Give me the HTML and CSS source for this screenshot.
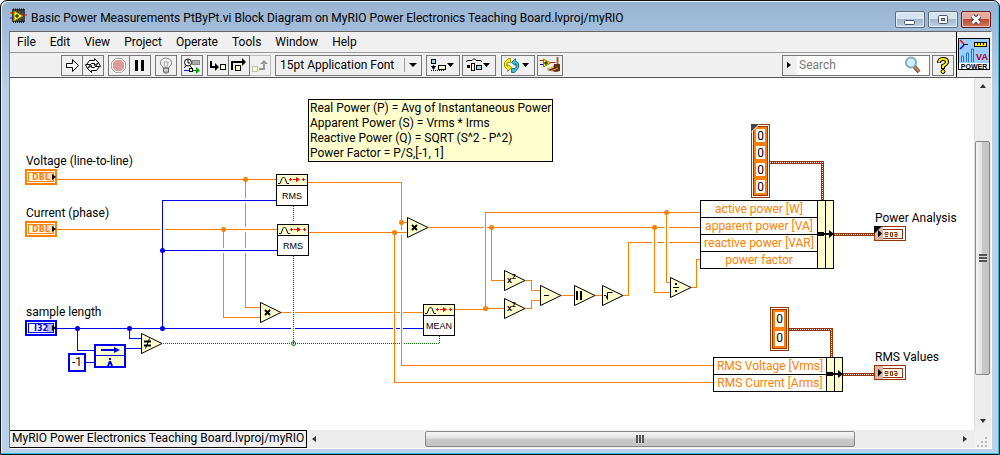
FILE: index.html
```
<!DOCTYPE html>
<html lang="en">
<head>
<meta charset="utf-8">
<title>Basic Power Measurements PtByPt.vi Block Diagram</title>
<link rel="stylesheet" href="styles.css">
</head>
<body>
<div class="window">
  <header class="titlebar">
    <svg class="app-icon" width="17" height="16" viewBox="0 0 17 16"><path d="M2 1h13v13H2z" fill="#444"/><path d="M3 1.5h12M3 14h12" stroke="#111" stroke-width="2" stroke-dasharray="1 1"/><path d="M0 5h4M13 7h4" stroke="#e00"/><path d="M0 10h4" stroke="#00f"/><path d="M4 3l9 5-9 5z" fill="#ff0" stroke="#880"/><path d="M5 8h4M7 6v4" stroke="#000"/></svg>
    <h1 class="title">Basic Power Measurements PtByPt.vi Block Diagram on MyRIO Power Electronics Teaching Board.lvproj/myRIO</h1>
    <div class="caption-buttons">
      <button class="caption" aria-label="Minimize"><svg width="30" height="15" viewBox="0 0 30 15"><rect x="9.500" y="8.500" width="10" height="4" rx="1" fill="#fff" stroke="#4b5563"/></svg></button>
      <button class="caption" aria-label="Maximize"><svg width="30" height="15" viewBox="0 0 30 15"><rect x="10.500" y="3.500" width="9" height="8" rx="1" fill="#fff" stroke="#4b5563"/><rect x="13.500" y="6.500" width="3" height="2" fill="#b4c6da" stroke="#4b5563"/></svg></button>
      <button class="caption close" aria-label="Close"><svg width="30" height="15" viewBox="0 0 30 15"><path d="M11.500 4l7 7M18.500 4l-7 7" stroke="#4b4550" stroke-width="5"/><path d="M11.500 4l7 7M18.500 4l-7 7" stroke="#fff" stroke-width="3"/></svg></button>
    </div>
  </header>
  <div class="client">
    <div class="top">
      <div class="bars">
        <nav class="menubar">
          <button>File</button><button>Edit</button><button>View</button><button>Project</button><button>Operate</button><button>Tools</button><button>Window</button><button>Help</button>
        </nav>
        <div class="toolbar">
          <div class="group">
            <button class="tool" aria-label="Run"><svg width="20" height="20" viewBox="0 0 20 20"><path d="M4.500 7.500h6v-4l6 6-6 6v-4h-6z" fill="#fff" stroke="#000"/></svg></button>
            <button class="tool" aria-label="Run continuously"><svg width="20" height="20" viewBox="0 0 20 20"><path d="M3.500 8.500l3-4h5v-2l4 4-4 3v-2h-3l-2 2" fill="#fff" stroke="#000"/><path d="M16.500 10.500l-3 4h-5v2l-4-4 4-3v2h3l2-2" fill="#fff" stroke="#000"/><path d="M2.500 8.500h5l-3 4zM17.500 10.500h-5l3-4z" fill="#fff" stroke="#000"/></svg></button>
          </div>
          <div class="group">
            <button class="tool" aria-label="Abort execution"><svg width="20" height="20" viewBox="0 0 20 20"><path d="M6.500 2.500h6l4 4v6l-4 4h-6l-4-4v-6z" fill="#eee" stroke="#aaa"/><path d="M7 4h5l3 3v5l-3 3H7l-3-3V7z" fill="#dc9c9c"/></svg></button>
            <button class="tool" aria-label="Pause"><svg width="20" height="20" viewBox="0 0 20 20"><path d="M6.500 4v11M12.500 4v11" stroke="#000" stroke-width="3"/></svg></button>
          </div>
          <div class="group"><button class="tool" aria-label="Highlight execution"><svg width="20" height="20" viewBox="0 0 20 20"><path d="M7.500 12l-3-4c-1-8 12-8 11 0l-3 4z" fill="#eee" stroke="#888"/><path d="M8 6l1 5M12 6l-1 5M8 6h4" stroke="#aaa" fill="none"/><path d="M7.500 12h5v4l-1 1h-3l-1-1z" fill="#aaa" stroke="#666"/><path d="M8 14h4" stroke="#eee"/></svg></button></div>
          <div class="group"><button class="tool" aria-label="Retain wire values"><svg width="20" height="20" viewBox="0 0 20 20"><circle cx="6" cy="6.500" r="3.500" fill="#fff" stroke="#000"/><path d="M6 4v3h2M4 10l-2 2M8 10l2 2" stroke="#000" fill="none"/><rect x="10.500" y="4.500" width="7" height="4" fill="#aaa" stroke="#888"/><path d="M2 14.500h5" stroke="#00f"/><path d="M11 14.500h4" stroke="#080"/><rect x="7.500" y="12.500" width="3" height="3" fill="#fff" stroke="#000"/><path d="M14 11l4 3.500-4 3.500z" fill="#0a0"/></svg></button></div>
          <div class="group">
            <button class="tool" aria-label="Step into"><svg width="20" height="20" viewBox="0 0 20 20"><path d="M3 5v6h5" fill="none" stroke="#000" stroke-width="2"/><path d="M7 7l4 4-4 4z"/><rect x="12.500" y="8.500" width="5" height="5" fill="#ffb" stroke="#000"/></svg></button>
            <button class="tool" aria-label="Step over"><svg width="20" height="20" viewBox="0 0 20 20"><path d="M3 14V6h11" fill="none" stroke="#000" stroke-width="2"/><path d="M13 2l4 4-4 4z"/><rect x="6.500" y="9.500" width="5" height="5" fill="#ffb" stroke="#000"/></svg></button>
            <button class="tool off" aria-label="Step out"><svg width="20" height="20" viewBox="0 0 20 20"><path d="M9 13h5V7" fill="none" stroke="#999" stroke-width="2"/><path d="M10 8l4-4 4 4z" fill="#999"/><rect x="2.500" y="10.500" width="5" height="5" fill="#ffc" stroke="#bbb"/></svg></button>
          </div>
          <div class="group font-group"><select class="font-select" aria-label="Text settings"><option>15pt Application Font</option></select><span class="drop"></span></div>
          <div class="group"><button class="tool wide" aria-label="Align objects"><svg width="32" height="20" viewBox="0 0 32 20"><rect x="4.500" y="3.500" width="4" height="4" fill="#8df" stroke="#000"/><path d="M6.500 9v3M4 14.500h14" stroke="#000" stroke-dasharray="1 1"/><path d="M4 10h5l-2.500 4z"/><rect x="11.500" y="9.500" width="7" height="4" fill="#ffb" stroke="#000"/><path d="M20 7h7l-3.500 4z"/></svg></button></div>
          <div class="group"><button class="tool wide" aria-label="Distribute objects"><svg width="32" height="20" viewBox="0 0 32 20"><path d="M3 5.500l2-1h4l2-2 2 2h4l2 1" stroke="#000" fill="none"/><rect x="4" y="9" width="3" height="3"/><rect x="8.500" y="7.500" width="3" height="7" fill="#ffb" stroke="#000"/><rect x="13.500" y="9.500" width="5" height="4" fill="#8df" stroke="#000"/><path d="M20 7h7l-3.500 4z"/></svg></button></div>
          <div class="group reorder"><button class="tool wide" aria-label="Reorder"><svg width="32" height="20" viewBox="0 0 32 20"><path d="M8.500 2.500h-2l-4 4v4l3 3v2l4-4-4-3v2l-1-2 1-2h3z" fill="#fe0" stroke="#990"/><path d="M9.500 16.500h3l4-5v-4l-3-3v-2l-4 4 4 3v-2l1 2-1 3h-4z" fill="#4bd" stroke="#278"/><path d="M20 7h7l-3.500 4z"/></svg></button></div>
          <div class="group"><button class="tool" aria-label="Clean up diagram"><svg width="24" height="20" viewBox="0 0 24 20"><path d="M2 4.500h5M12 6.500h5" stroke="#e00"/><path d="M2 8.500h4" stroke="#00f"/><path d="M5.500 3l7 4-7 4z" fill="#ff0" stroke="#880"/><path d="M6 7h4M8 5v4" stroke="#000"/><path d="M19.500 1v9" stroke="#963" stroke-width="2"/><path d="M16 8h6v7l-4 1-9-2 6-2z" fill="#631"/><path d="M9 13l7-2M13 15l7-3" stroke="#d93"/></svg></button></div>
          <div class="search"><span class="search-arrow"></span><input type="search" placeholder="Search" aria-label="Search"><svg width="18" height="18" viewBox="0 0 18 18"><path d="M10 10l5 6" stroke="#555" stroke-width="4"/><path d="M11 11l4 4.500" stroke="#c84" stroke-width="2"/><circle cx="7" cy="6.500" r="5" fill="#cdf0ff" stroke="#8ab" stroke-width="2"/></svg></div>
          <button class="tool help" aria-label="Context help"><svg width="20" height="20" viewBox="0 0 20 20"><path d="M6 7q0-4 4-4t4 3q0 2-4 4v3" fill="none" stroke="#000" stroke-width="4"/><circle cx="10" cy="15.500" r="2" fill="#fe0" stroke="#000"/><path d="M6 6.500q0-3.500 4-3.500t4 3q0 2-4 4v2" fill="none" stroke="#fe0" stroke-width="2"/></svg></button>
        </div>
      </div>
      <div class="vi-icon"><svg width="32" height="32" viewBox="0 0 32 32"><rect x=".5" y=".5" width="31" height="31" fill="#9cf" stroke="#000"/><path d="M5 6.500h5" stroke="#000"/><path d="M2 2l4 4" stroke="#e00" stroke-width="1.500"/><path d="M6 7l-4 4" stroke="#00f" stroke-width="1.500"/><rect x="16.500" y="4.500" width="12" height="4" fill="#fe0" stroke="#000"/><path d="M19.500 5v2M22.500 5v2M25.500 5v2" stroke="#000"/><path d="M3.500 24v-6h2v6M8.500 24v-9h2v9M13.500 24V11h2v13" fill="none" stroke="#27c"/><path d="M1 25h30v6H1z" fill="#fff"/><text x="24" y="22" class="vi-va">VA</text><text x="16" y="31" class="vi-power">POWER</text></svg></div>
    </div>
    <div class="work">
      <main class="canvas">
        <svg class="wires" width="964" height="350" viewBox="10 78 964 350">
          <defs>
            <g id="gate"><path d="M.5 .5v20L21 10.500z" fill="#ffffce" stroke="#000"/></g>
            <g id="sq"><text x="3" y="13" class="sq-base">x</text><text x="8" y="9" class="sq-power">2</text></g>
            <g id="mul"><path d="M5 8l5 5M10 8l-5 5" stroke="#000" stroke-width="2"/></g>
            <g id="stat"><rect x=".5" y=".5" width="31" height="31" fill="#fff" stroke="#000"/><path d="M1 1h30v10H1z" fill="#ffffce"/><path d="M0 11.500h32" stroke="#000"/><path d="M2 9.500h2l2-5q1.500-3 3 0l2 5h2" fill="none" stroke="#000"/><path d="M13 5.500h3M14.500 4v3M26 5.500h3M27.500 4v3M17 5.500h6" stroke="#f00"/><path d="M20 3l4 2.500-4 2.500z" fill="#f00"/></g>
            <g id="term"><path d="M1 1h30v14H1z" fill="#fff" stroke="currentColor" stroke-width="2"/><rect x="3.500" y="3.500" width="25" height="9" fill="#fff" stroke="currentColor"/><path d="M22 3h7v10h-7z" fill="currentColor" opacity=".3"/><path d="M27 5l4 3-4 3z"/></g>
            <g id="ind"><rect x=".5" y=".5" width="31" height="14" fill="#fff" stroke="#993300"/><rect x="3.500" y="3.500" width="25" height="9" fill="#fff" stroke="#993300"/><path d="M1 1h8v13H1z" fill="#dbb8a5"/><path d="M4 4l4 3.500-4 4z"/><path d="M14 8.500h-3v-2h3v2M11 10.500h3M16.500 6.500v4h2v-4zM20 6.500h3v4h-2v-2h2" fill="none" stroke="#993300"/></g>
            <g id="merge"><path d="M0 2v-4h6V2H0z"/><path d="M5 0h9" stroke="#000" stroke-width="2"/><path d="M11-4l5 4-5 4z"/></g>
          </defs>
          <g class="wire dbl">
            <path d="M57 179.500H276M57 229.500H160M165 229.500H277M245.500 179V198M245.500 203V227M245.500 232V248M245.500 253V307.500H260M223.500 229V248M223.500 253V317.500H260"/>
            <path d="M308 182.500H401.500V230M401.500 235V365.500H713M401 222.500H407M309 232.500H407M394.500 232V382.500H713M428 227.500H484M487 227.500H664M669 227.500H700"/>
            <path d="M281 312.500H291M295 312.500H393M396 312.500H400M403 312.500H423M455 309.500H485.500V212.500H700M485 308.500H504M491.500 227V280.500H504"/>
            <path d="M525 280.500H531.500V290.500H540M525 308.500H531.500V300.500H540M561 295.500H574M595 295.500H602M623 295.500H628.500V242.500H652M657 242.500H664M669 242.500H700"/>
            <path d="M654.500 227V292.500H670M666.500 212V282.500H670M691 287.500H696.500V259.500H700"/>
          </g>
          <g class="wire int"><path d="M57 328.500H291M295 328.500H393M396 328.500H400M403 328.500H423M162.500 328V200.500H276M162 250.500H277M77.500 328V350.500H94M129.500 328V338.500H141M126 348.500H141M86 362.500H94"/></g>
          <g class="wire bool"><path d="M163 343.500H400M404 343.500H439.500V336M293.500 206V222M293.500 256V343"/><circle cx="293.500" cy="343.500" r="2"/></g>
          <g fill="#ff8000"><circle cx="245.500" cy="179.500" r="2.500"/><circle cx="223.500" cy="229.500" r="2.500"/><circle cx="401.500" cy="222.500" r="2.500"/><circle cx="394.500" cy="232.500" r="2.500"/><circle cx="485.500" cy="308.500" r="2.500"/><circle cx="491.500" cy="227.500" r="2.500"/><circle cx="654.500" cy="227.500" r="2.500"/><circle cx="666.500" cy="212.500" r="2.500"/></g>
          <g fill="#0000f0"><circle cx="77.500" cy="328.500" r="2.500"/><circle cx="129.500" cy="328.500" r="2.500"/><circle cx="162.500" cy="328.500" r="2.500"/><circle cx="162.500" cy="250.500" r="2.500"/></g>
          <g class="cluster"><path d="M770 162.500H822.500V200M833 234.500H874M788 329.500H831.500V357M842 374.500H874"/></g>
          <g class="cluster-core"><path d="M770 162.500H822.500V200M833 234.500H874M788 329.500H831.500V357M842 374.500H874"/></g>
          <g color="#ff8000"><use href="#term" x="25" y="169"/><use href="#term" x="25" y="221"/></g>
          <g color="#0000f0"><use href="#term" x="25" y="320"/></g>
          <g class="term-text"><text x="41" y="180" fill="#ff8000">DBL</text><text x="41" y="232" fill="#ff8000">DBL</text><text x="41" y="331" fill="#0000f0">I32</text></g>
          <use href="#stat" x="276" y="174"/><use href="#stat" x="277" y="224"/><use href="#stat" x="423" y="304"/>
          <g class="stat-text"><text x="292" y="199">RMS</text><text x="293" y="249">RMS</text><text x="439" y="329">MEAN</text></g>
          <use href="#gate" x="141" y="333"/><path d="M144 341.500h7M144 345.500h7" stroke="#000" stroke-width="2"/><path d="M149.500 338.500l-4 10" stroke="#000"/>
          <use href="#gate" x="407" y="217"/><use href="#mul" x="407" y="217"/>
          <use href="#gate" x="260" y="302"/><use href="#mul" x="260" y="302"/>
          <use href="#gate" x="504" y="270"/><use href="#sq" x="504" y="270"/>
          <use href="#gate" x="504" y="298"/><use href="#sq" x="504" y="298"/>
          <use href="#gate" x="540" y="285"/><path d="M544 295.500h5" stroke="#000"/>
          <use href="#gate" x="574" y="285"/><path d="M577 291v9M581 291v9" stroke="#000" stroke-width="2"/>
          <use href="#gate" x="602" y="285"/><path d="M604 295.500h2l1.500 4v-7h5" stroke="#000" fill="none"/>
          <use href="#gate" x="670" y="277"/><path d="M673 287.500h6" stroke="#000"/><path d="M675 283h2v2h-2zM675 290h2v2h-2z"/>
          <rect x="95" y="345" width="30" height="22" fill="#ffffce" stroke="#0000f0" stroke-width="2"/><path d="M95 355.500h30" stroke="#0000f0"/><path d="M101 350h15" stroke="#0000f0" stroke-width="2"/><path d="M114 347l6 3-6 3z" fill="#0000f0"/><path d="M110 358v2M110 361l-2 5M110 361l2 5" stroke="#0000f0" stroke-width="2"/>
          <use href="#ind" x="874" y="226"/><use href="#ind" x="874" y="365"/><path d="M874 226h8l-8 8z"/>
        </svg>
        <p class="label voltage">Voltage (line-to-line)</p>
        <p class="label current">Current (phase)</p>
        <p class="label sample">sample length</p>
        <p class="label analysis">Power Analysis</p>
        <p class="label values">RMS Values</p>
        <div class="note">Real Power (P) = Avg of Instantaneous Power<br>Apparent Power (S) = Vrms * Irms<br>Reactive Power (Q) = SQRT (S^2 - P^2)<br>Power Factor = P/S,[-1, 1]</div>
        <div class="minus-one">-1</div>
        <div class="constant four"><span>0</span><span>0</span><span>0</span><span>0</span></div>
        <div class="constant two"><span>0</span><span>0</span></div>
        <div class="bundle power"><div class="fields"><span>active power [W]</span><span>apparent power [VA]</span><span>reactive power [VAR]</span><span>power factor</span></div><i></i><i></i></div>
        <div class="bundle rms"><div class="fields"><span>RMS Voltage [Vrms]</span><span>RMS Current [Arms]</span></div><i></i><i></i></div>
        <svg class="wires" width="964" height="350" viewBox="10 78 964 350"><use href="#merge" x="818" y="234"/><use href="#merge" x="827" y="374"/><path d="M751 124h8l-8 8z" fill="#444"/><path d="M751 132.500l8-8" stroke="#fff"/></svg>
      </main>
      <div class="vscroll"><span class="arrow up"></span><div class="track"><div class="thumb"><b></b></div></div><span class="arrow down"></span></div>
    </div>
    <footer class="bottom">
      <div class="target">MyRIO Power Electronics Teaching Board.lvproj/myRIO</div>
      <div class="hscroll"><span class="arrow left"></span><div class="track"><div class="thumb"><b></b></div></div><span class="arrow right"></span></div>
      <svg class="grip" width="16" height="18" viewBox="0 0 16 18"><path d="M10 7h2v2h-2zM6 11h2v2H6zM10 11h2v2h-2zM2 15h2v2H2zM6 15h2v2H6zM10 15h2v2h-2z" fill="#bbb"/></svg>
    </footer>
  </div>
</div>
</body>
</html>
```
FILE: styles.css
```
* { box-sizing: border-box; }
html, body { height: 100%; }
body {
  margin: 0;
  background: #fff;
  font: 12px/15px Roboto, "Open Sans", sans-serif;
  color: #000;
}
button, input, select { font: inherit; color: inherit; }
svg { display: block; }
.window {
  height: 100vh;
  min-height: 400px;
  display: flex;
  flex-direction: column;
  padding: 0 7px 5px 8px;
  border: 1px solid #111;
  border-radius: 7px 7px 0 0;
  background: linear-gradient(#98b4d2, #b9d1ea 90px);
  box-shadow: inset -1px -1px #25c4e8, inset 1px 1px #e8f2fb;
}
.titlebar { height: 30px; display: flex; align-items: center; gap: 4px; flex: none; }
.app-icon { margin-left: 1px; }
.title { flex: 1; margin: 0; font-size: 12px; font-weight: 400; line-height: 16px; padding-top: 3px; white-space: nowrap; overflow: hidden; }
.caption-buttons { display: flex; gap: 3px; margin-right: 1px; padding-top: 6px; }
.caption { width: 30px; height: 17px; padding: 0; border: 1px solid #5b6c80; border-radius: 2px; overflow: hidden; background: linear-gradient(#d5e2f0 45%, #a3b8d0 50%, #bdd2e8); box-shadow: inset 0 0 0 1px #e4eef8; }
.caption svg { margin-left: -1px; }
.caption.close { border-color: #5c1f1f; background: linear-gradient(#e6a99c 45%, #bd4a31 50%, #d07a5c); box-shadow: inset 0 0 0 1px #ecc0b4; }
.client { flex: 1; min-height: 0; display: flex; flex-direction: column; border: 1px solid #fff; border-top: 1px solid #666; border-left-color: #777; background: #fff; }
.top { display: flex; flex: none; background: #f0f0f0; border-bottom: 1px solid #555; }
.bars { flex: 1; }
.menubar { height: 21px; display: flex; gap: 14px; padding: 0 7px; border-bottom: 1px solid #999; }
.menubar button { border: 0; padding: 0; background: none; line-height: 18px; }
.toolbar { height: 24px; display: flex; align-items: center; gap: 4px; padding: 0 2px 0 51px; }
.group { display: flex; }
.tool { height: 21px; padding: 0; border: 1px solid #777; background: #f0f0f0; display: block; }
.tool + .tool { border-left: 0; }
.off { border-color: #bbb; }
.font-group { position: relative; }
.font-select { appearance: none; width: 147px; height: 21px; padding: 0 20px 0 4px; border: 1px solid #777; border-radius: 0; background: #f0f0f0; }
.drop { position: absolute; right: 0; top: 3px; width: 18px; height: 14px; border-left: 1px solid #999; pointer-events: none; }
.drop::after { content: ""; position: absolute; left: 4px; top: 5px; border: 4px solid transparent; border-top-color: #000; border-bottom: 0; }
.group .wide { margin-right: -2px; }
.reorder { margin-left: 3px; }
.search { width: 148px; height: 21px; margin-left: auto; margin-right: -2px; display: flex; align-items: center; border: 1px solid #777; background: #fff; padding-right: 7px; }
.search-arrow { width: 14px; height: 19px; background: #f0f0f0; flex: none; padding: 6px 4px; }
.search-arrow::after { content: ""; display: block; border: 3px solid transparent; border-left: 4px solid #000; border-right: 0; }
.search input { flex: 1; min-width: 0; border: 0; padding: 0 2px; outline: 0; background: none; }
.search input::placeholder { color: #777; }
.vi-icon { width: 35px; border-left: 1px solid #000; padding: 6px 1px; }
.vi-va { font: 700 9px "Liberation Sans", sans-serif; fill: #b00020; text-anchor: middle; }
.vi-power { font: 700 7px "Liberation Sans", sans-serif; text-anchor: middle; }
.work { flex: 1; min-height: 0; display: flex; }
.canvas { flex: 1; min-width: 0; position: relative; overflow: hidden; background: #fff; }
.wires { position: absolute; left: 0; top: 0; }
.wire { fill: none; stroke-width: 1; shape-rendering: crispEdges; }
.dbl { stroke: #ff8000; }
.int { stroke: #0000f0; }
.bool { stroke: #007000; stroke-dasharray: 1 1; }
.bool circle { stroke-dasharray: none; shape-rendering: auto; }
.cluster { fill: none; stroke: #993300; stroke-width: 3; shape-rendering: crispEdges; }
.cluster-core { fill: none; stroke: #fff; stroke-width: 1; stroke-dasharray: 1 1; shape-rendering: crispEdges; }
.term-text { font: 700 8px "DejaVu Sans", sans-serif; text-anchor: middle; }
.stat-text { font: 9px "Liberation Sans", sans-serif; text-anchor: middle; }
.sq-base { font: 700 9px "Liberation Sans", sans-serif; }
.sq-power { font: 700 7px "Liberation Sans", sans-serif; }
.label { position: absolute; margin: 0; white-space: nowrap; }
.voltage { left: 16px; top: 76px; }
.current { left: 16px; top: 128px; }
.sample { left: 16px; top: 227px; }
.analysis { left: 865px; top: 133px; }
.values { left: 865px; top: 272px; }
.note { position: absolute; left: 298px; top: 21px; min-width: 243px; padding: 1px 1px 0; border: 1px solid #000; background: #ffffce; white-space: nowrap; }
.minus-one { position: absolute; left: 58px; top: 275px; width: 18px; border: 2px solid #0000f0; background: #fff; text-align: center; }
.constant { position: absolute; width: 19px; display: flex; flex-direction: column; gap: 4px; padding: 4px; border: 1px solid #993300; background: #ff8000; box-shadow: inset 0 0 0 1px #fff, inset 0 0 0 2px #993300; }
.constant span { height: 13px; background: #fff; text-align: center; line-height: 14px; }
.four { left: 741px; top: 46px; }
.two { left: 760px; top: 229px; }
.two span { height: 15px; line-height: 15px; }
.bundle { position: absolute; display: flex; border: 1px solid #000; background: #fff; color: #ff8000; line-height: 17px; }
.bundle span { display: block; height: 17px; border-bottom: 1px solid #000; text-align: center; white-space: nowrap; }
.bundle span:last-child { border: 0; height: 16px; }
.bundle i { width: 8px; border-left: 1px solid #000; background: #ffffce; }
.power { left: 690px; top: 122px; }
.power .fields { width: 116px; }
.rms { left: 703px; top: 279px; }
.rms .fields { width: 112px; }
.vscroll { width: 17px; display: flex; flex-direction: column; align-items: center; background: #ededed; border-left: 1px solid #e0e0e0; }
.track { flex: 1; display: flex; width: 100%; min-width: 0; min-height: 0; }
.vscroll .track { flex-direction: column; padding: 46px 1px 38px 0; }
.hscroll .track { padding: 1px 103px 1px 101px; }
.thumb { flex: 1; display: flex; align-items: center; justify-content: center; border: 1px solid #888; border-radius: 2px; }
.vscroll .thumb { background: linear-gradient(90deg, #f5f5f5, #e0e0e0 45%, #c8c8c8 50%, #c4c4c4); }
.hscroll .thumb { background: linear-gradient(#f5f5f5, #e0e0e0 45%, #c8c8c8 50%, #c4c4c4); }
.thumb b { width: 8px; height: 8px; background: repeating-linear-gradient(#555 0 2px, #ddd 2px 3px); }
.hscroll .thumb b { background: repeating-linear-gradient(90deg, #555 0 2px, #ddd 2px 3px); }
.arrow { flex: none; width: 17px; height: 17px; padding: 6px 5px; }
.arrow::after { content: ""; display: block; width: 0; border: 3px solid transparent; }
.up::after { border-bottom: 4px solid #333; border-top: 0; }
.down::after { border-top: 4px solid #333; border-bottom: 0; }
.left::after { border-right: 4px solid #333; border-left: 0; }
.right::after { border-left: 4px solid #333; border-right: 0; }
.bottom { height: 18px; flex: none; display: flex; background: #f0f0f0; }
.target { width: 297px; flex: none; border: 1px solid #000; border-left: 0; padding: 0 2px; line-height: 14px; white-space: nowrap; overflow: hidden; }
.hscroll { flex: 1; min-width: 0; display: flex; background: #ededed; }
.grip { flex: none; }
```
